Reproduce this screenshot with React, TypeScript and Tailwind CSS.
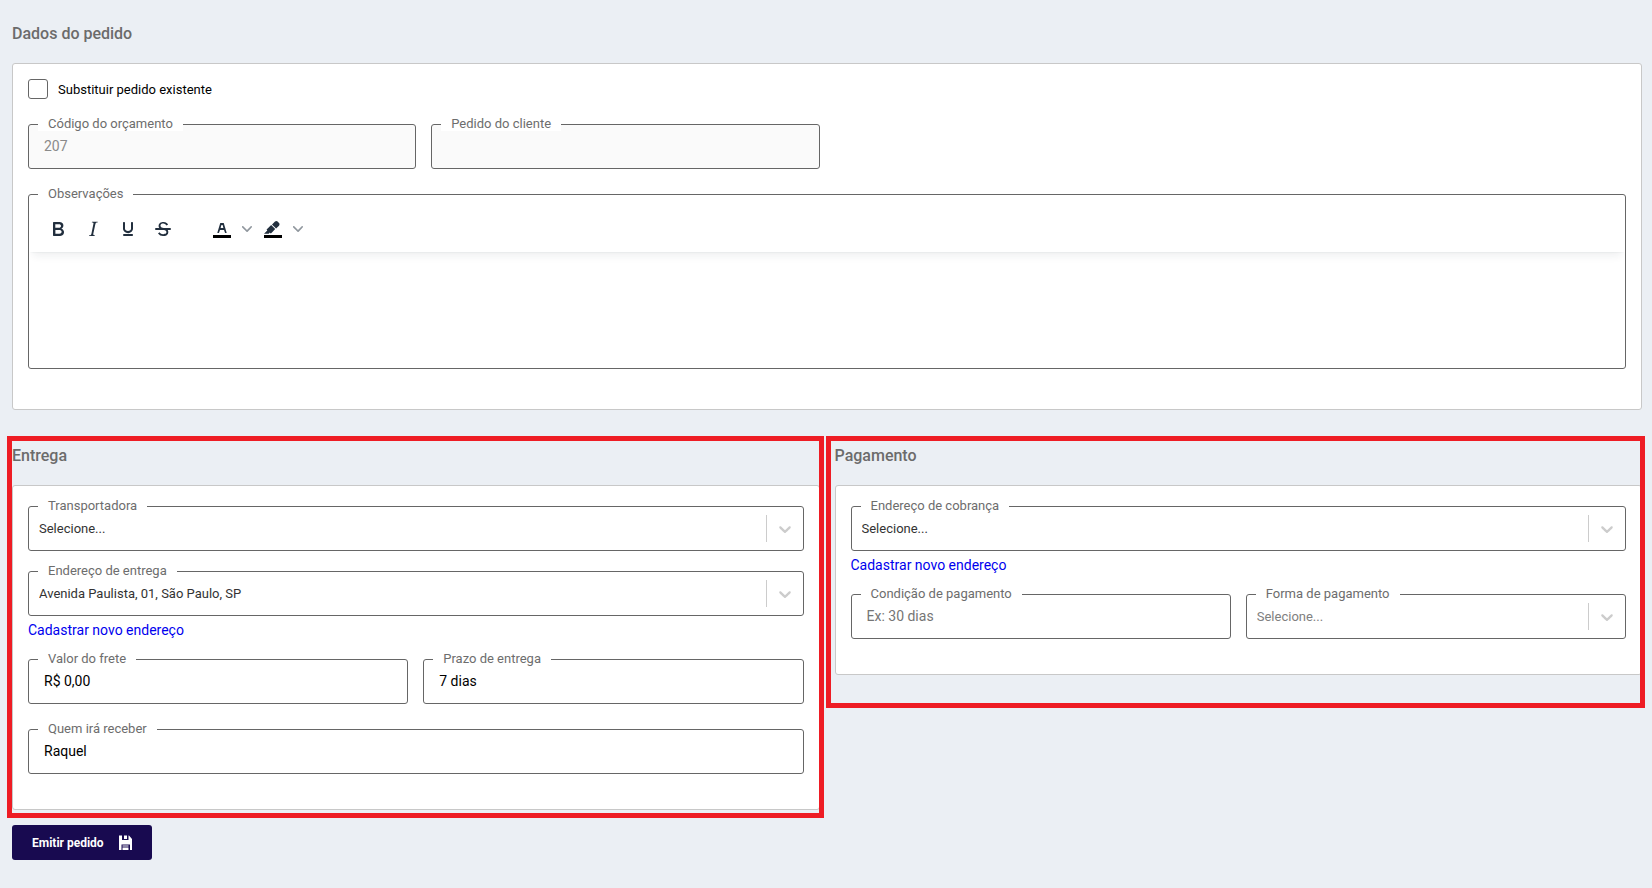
import React, { useId, type ReactNode } from "react";

const ICONS = {
  bold: "M7.8 19c-.3 0-.5 0-.6-.2l-.2-.5V5.700c0-.2 0-.4.2-.5l.6-.2h5c1.500 0 2.700.3 3.500 1 .7.6 1.100 1.400 1.100 2.500a3 3 0 0 1-.6 1.900c-.4.6-1 1-1.600 1.200.4.1.9.3 1.300.6s.8.7 1 1.200c.4.4.5 1 .5 1.600 0 1.300-.4 2.300-1.300 3-.8.7-2.100 1-3.800 1H7.800Zm5-8.300c.6 0 1.200-.1 1.600-.5.4-.3.6-.7.6-1.300 0-1.100-.8-1.700-2.300-1.700H9.300v3.500h3.400Zm.5 6c.7 0 1.300-.1 1.700-.4.4-.4.6-.9.6-1.500s-.2-1-.7-1.400c-.4-.3-1-.4-2-.4H9.400v3.800h4Z",
  italic:
    "m16.7 4.7-.1.9h-.3c-.6 0-1 0-1.4.3-.3.3-.4.6-.5 1.1l-2.1 9.8v.6c0 .5.4.8 1.4.8h.2l-.2.8H8l.2-.8h.2c1.1 0 1.8-.5 2-1.5l2-9.8.1-.5c0-.6-.4-.8-1.4-.8h-.3l.2-.9h5.8Z",
  underline:
    "M16 5c.6 0 1 .4 1 1v5.5a4 4 0 0 1-.4 1.8l-1 1.4a5.3 5.3 0 0 1-5.5 1 5 5 0 0 1-1.6-1c-.5-.4-.8-.9-1.1-1.4a4 4 0 0 1-.4-1.8V6c0-.6.4-1 1-1s1 .4 1 1v5.5c0 .3 0 .6.2 1l.6.7a3.3 3.3 0 0 0 2.2.8 3.4 3.4 0 0 0 2.2-.8c.3-.2.4-.5.6-.8l.2-.9V6c0-.6.4-1 1-1ZM8 17h8c.6 0 1 .4 1 1s-.4 1-1 1H8a1 1 0 0 1 0-2Z",
  strike:
    "M15.6 8.5c-.5-.7-1-1.1-1.3-1.3-.6-.4-1.3-.6-2-.6-2.7 0-2.8 1.7-2.8 2.1 0 1.6 1.8 2 3.2 2.3 4.4.9 4.6 2.8 4.6 3.9 0 1.4-.7 4.1-5 4.1A6.2 6.2 0 0 1 7 16.4l1.5-1.1c.4.6 1.6 2 3.7 2 1.6 0 2.5-.4 3-1.2.4-.8.3-2-.8-2.6-.7-.4-1.6-.7-2.9-1-1-.2-3.9-.8-3.9-3.6C7.6 6 10.3 5 12.4 5c2.9 0 4.2 1.6 4.7 2.4l-1.5 1.1Z",
  strikeLine: "M5 11h14a1 1 0 0 1 0 2H5a1 1 0 0 1 0-2Z",
  textColor:
    "M8.7 16h-.8a.5.5 0 0 1-.5-.6l2.7-9c.1-.3.3-.4.5-.4h2.8c.2 0 .4.1.5.4l2.7 9a.5.5 0 0 1-.5.6h-.8a.5.5 0 0 1-.4-.4l-.7-2.2c0-.3-.3-.4-.5-.4h-3.4c-.2 0-.4.1-.5.4l-.7 2.2c0 .3-.2.4-.4.4Zm2.6-7.6-.6 2a.5.5 0 0 0 .5.6h1.6a.5.5 0 0 0 .5-.6l-.6-2c0-.3-.3-.4-.5-.4h-.4c-.2 0-.4.1-.5.4Z",
  highlight:
    "M7.7 16.7H3l3.3-3.3-.7-.8L10.2 8l4 4.1-4 4.2c-.2.2-.6.2-.8 0l-.6-.7-1.1 1.1zm5-7.5L11 7.4l3-2.9a2 2 0 0 1 2.6 0L18 6c.7.7.7 2 0 2.7l-2.9 2.9-1.8-1.8-.5-.6",
};

const label =
  "relative z-10 -mb-[7px] ml-[10px] self-start bg-white px-[10px] text-[13px] leading-[15px] text-[#6d6d6d]";
const control =
  "h-[45px] w-full rounded-[3px] border border-[#666] bg-white outline-none";

function TextField(props: {
  title: string;
  value?: string;
  placeholder?: string;
  disabled?: boolean;
}) {
  const id = useId();
  return (
    <div className="flex min-w-0 flex-col">
      <label htmlFor={id} className={label}>
        {props.title}
      </label>
      <input
        id={id}
        type="text"
        defaultValue={props.value}
        placeholder={props.placeholder}
        disabled={props.disabled}
        className={`${control} px-[15px] pb-[2px] text-[14px] text-black placeholder:text-[#757575] disabled:bg-[#fafafa] disabled:text-[#8a8a8a]`}
      />
    </div>
  );
}

function SelectField(props: { title: string; value: string; muted?: boolean }) {
  const id = useId();
  return (
    <div className="flex min-w-0 flex-col">
      <label htmlFor={id} className={label}>
        {props.title}
      </label>
      <div className="relative">
        <select
          id={id}
          className={`${control} appearance-none pr-10 pl-[10px] text-[13px] ${props.muted ? "text-[#808080]" : "text-[#333]"}`}
        >
          <option>{props.value}</option>
        </select>
        <span className="pointer-events-none absolute inset-y-px right-px flex items-center">
          <span className="h-[27px] w-px bg-[#ccc]" />
          <svg viewBox="0 0 20 20" className="mx-2 size-5 fill-[#ccc]">
            <path d="M4.516 7.548c0.436-0.446 1.043-0.481 1.576 0l3.908 3.747 3.908-3.747c0.533-0.481 1.141-0.446 1.574 0 0.436 0.445 0.408 1.197 0 1.615-0.406 0.418-4.695 4.502-4.695 4.502-0.217 0.223-0.502 0.335-0.787 0.335s-0.57-0.112-0.789-0.335c0 0-4.287-4.084-4.695-4.502s-0.436-1.17 0-1.615z" />
          </svg>
        </span>
      </div>
    </div>
  );
}

function ToolIcon({ d, line, swatch }: { d: string; line?: string; swatch?: boolean }) {
  return (
    <svg viewBox="0 0 24 24" className="size-6 fill-[#222f3e]">
      {swatch && <path d="M3 18h18v3H3z" className="fill-black" />}
      <path fillRule="evenodd" d={d} />
      {line && <path d={line} />}
    </svg>
  );
}

function ToolButton({ name, d, line }: { name: string; d: string; line?: string }) {
  return (
    <button type="button" aria-label={name} className="flex w-[34px] justify-center">
      <ToolIcon d={d} line={line} />
    </button>
  );
}

function SplitButton({ name, d }: { name: string; d: string }) {
  return (
    <div className="flex items-center gap-2">
      <button type="button" aria-label={name}>
        <ToolIcon d={d} swatch />
      </button>
      <button type="button" aria-label={`${name}: opções`}>
        <svg viewBox="0 0 10 10" className="size-[10px] fill-[#222f3e]/50">
          <path d="M8.7 2.2c.3-.3.8-.3 1 0 .4.4.4.9 0 1.2L5.7 7.8c-.3.3-.9.3-1.2 0L.2 3.4a.8.8 0 0 1 0-1.2c.3-.3.8-.3 1.1 0L5 6l3.7-3.8Z" />
        </svg>
      </button>
    </div>
  );
}

function Editor() {
  const id = useId();
  return (
    <div className="flex flex-col">
      <label htmlFor={id} className={label}>
        Observações
      </label>
      <div className="overflow-hidden rounded-[3px] border border-[#666] bg-white">
        <div className="relative flex pt-[22px] pb-[11px] pl-3 shadow-[0_2px_2px_-2px_rgba(34,47,62,0.1),0_8px_8px_-4px_rgba(34,47,62,0.07)]">
          <div className="flex gap-px">
            <ToolButton name="Negrito" d={ICONS.bold} />
            <ToolButton name="Itálico" d={ICONS.italic} />
            <ToolButton name="Sublinhado" d={ICONS.underline} />
            <ToolButton name="Tachado" d={ICONS.strike} line={ICONS.strikeLine} />
          </div>
          <div className="ml-[30px] flex gap-[9px]">
            <SplitButton name="Cor do texto" d={ICONS.textColor} />
            <SplitButton name="Cor de fundo" d={ICONS.highlight} />
          </div>
        </div>
        <textarea
          id={id}
          className="block h-[116px] w-full resize-none px-4 py-3 text-[14px] outline-none"
        />
      </div>
    </div>
  );
}

function Title({ children }: { children: ReactNode }) {
  return (
    <h2 className="mb-[19px] pt-px text-[16px] leading-5 font-medium text-[#6b6b6b]">{children}</h2>
  );
}

function NewAddressLink() {
  return (
    <a href="#novo-endereco" className="mb-[7px] self-start text-[14px] leading-7 text-[#0000ee]">
      Cadastrar novo endereço
    </a>
  );
}

const card = "flex flex-col rounded-[3px] border border-[#c8c8c8] bg-white px-[15px]";

export default function App() {
  return (
    <main className="min-h-screen bg-[#ebeff4] pt-[23px] pr-[10px] pb-7 pl-3 font-[Roboto,sans-serif]">
      <section>
        <Title>Dados do pedido</Title>
        <div className={`${card} gap-[17px] pt-[15px] pb-10`}>
          <label className="flex h-5 items-center gap-[10px] self-start text-[13px] leading-[22px] text-black">
            <input
              type="checkbox"
              className="size-5 appearance-none rounded-[3px] border border-[#666] bg-white checked:bg-[#180a50]"
            />
            <span className="pt-[2px]">Substituir pedido existente</span>
          </label>
          <div className="grid grid-cols-4 gap-[15px]">
            <TextField title="Código do orçamento" value="207" disabled />
            <TextField title="Pedido do cliente" disabled />
          </div>
          <Editor />
        </div>
      </section>

      <div className="mt-[35px] grid grid-cols-2 items-start gap-[15px]">
        <section className="relative">
          <Title>Entrega</Title>
          <div className={`${card} pt-3 pb-[35px]`}>
            <div className="flex flex-col gap-3">
              <SelectField title="Transportadora" value="Selecione..." />
              <SelectField title="Endereço de entrega" value="Avenida Paulista, 01, São Paulo, SP" />
            </div>
            <NewAddressLink />
            <div className="flex flex-col gap-[17px]">
              <div className="grid grid-cols-2 gap-[15px]">
                <TextField title="Valor do frete" value="R$ 0,00" />
                <TextField title="Prazo de entrega" value="7 dias" />
              </div>
              <TextField title="Quem irá receber" value="Raquel" />
            </div>
          </div>
          <div className="pointer-events-none absolute -top-[9px] -right-1 -bottom-2 -left-[5px] z-20 border-[5px] border-[#ee1c24]" />
        </section>

        <section className="relative">
          <Title>Pagamento</Title>
          <div className={`${card} pt-3 pb-[35px]`}>
            <SelectField title="Endereço de cobrança" value="Selecione..." />
            <NewAddressLink />
            <div className="grid grid-cols-2 gap-[15px]">
              <TextField title="Condição de pagamento" placeholder="Ex: 30 dias" />
              <SelectField title="Forma de pagamento" value="Selecione..." muted />
            </div>
          </div>
          <div className="pointer-events-none absolute -top-[9px] -right-[3px] -bottom-[33px] -left-[9px] z-20 border-[5px] border-[#ee1c24]" />
        </section>
      </div>

      <button
        type="button"
        className="mt-[15px] flex h-[35px] items-center gap-[15px] rounded-[3px] bg-[#180a50] px-5 text-[12px] font-bold text-white"
      >
        Emitir pedido
        <svg viewBox="0 0 13 15" className="h-[15px] w-[13px]">
          <path
            fill="#fff"
            fillRule="evenodd"
            d="M0 .5h3V5h6.500V.5h.5l3 3.500v11h-2V9.500H2.500V15H0ZM5 .5h3V4H5ZM3.500 10.500h6v1h-6Zm0 2h6V15h-6Z"
          />
        </svg>
      </button>
    </main>
  );
}
